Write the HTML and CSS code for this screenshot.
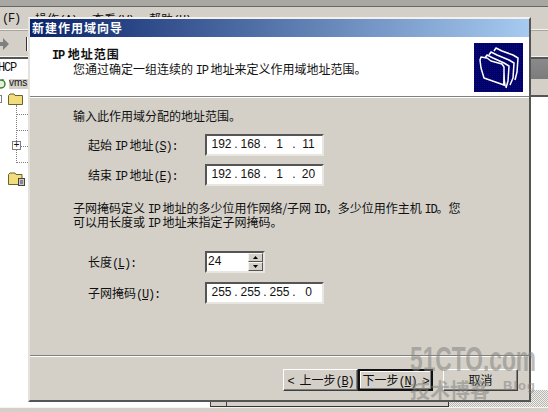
FILE: index.html
```html
<!DOCTYPE html>
<html lang="zh-CN">
<head>
  <meta charset="UTF-8" />
  <title>新建作用域向导</title>
  <link rel="stylesheet" href="styles.css">
</head>
<body>
  <div class="desktop">
    <div class="mmc">
      <div class="mmc-title"></div>
      <div class="mmc-menu">
        <span class="menu-file lat">(F)</span>
        <span class="menu-item">操作<span class="lat">(A)</span></span>
        <span class="menu-item">查看<span class="lat">(V)</span></span>
        <span class="menu-item">帮助<span class="lat">(H)</span></span>
      </div>
      <div class="mmc-tools">
        <svg class="tool-arrow" width="10" height="12" viewBox="0 0 10 12"><path d="M0 4h3V0l6 6-6 6V8H0z" fill="#808080"/></svg>
        <span class="tool-sep"></span>
      </div>
      <div class="mmc-head">
        <div class="head-left">HCP</div>
        <div class="head-right"></div>
      </div>
      <div class="mmc-main">
        <div class="tree">
          <div class="tree-server">
            <svg width="7" height="12" viewBox="0 0 7 12"><circle cx="1" cy="7" r="4" fill="#e6f0d8" stroke="#2f7a2f" stroke-width="1.4"/><path d="M3 0v3" stroke="#555"/></svg>
            <span class="tree-sel">vms</span>
          </div>
          <div class="tree-folder">
            <span class="tree-box"></span>
            <svg width="15" height="12" viewBox="0 0 15 12"><path d="M.5 2.500 2 1h4l1 1.500h7.500v9H.5z" fill="#f2dc7c" stroke="#6b6232"/></svg>
          </div>
          <div class="tree-lines">
            <span class="tree-branch tree-branch-first"></span>
            <span class="tree-branch"></span>
            <span class="tree-branch"><span class="tree-plus">+</span></span>
            <span class="tree-branch"></span>
          </div>
          <div class="tree-folder tree-last">
            <svg width="17" height="15" viewBox="0 0 17 15"><path d="M.5 3.500 2 2h5l1 1.500h6v10H.5z" fill="#f2dc7c" stroke="#6b6232"/><rect x="10.500" y="7.500" width="6" height="7" fill="#c8c8c8" stroke="#444"/><path d="M12 10h3M12 12h3" stroke="#444"/></svg>
          </div>
        </div>
        <div class="pane-right"><div class="pane-band"></div></div>
      </div>
      <div class="mmc-scroll">
        <div class="scroll-left"></div>
        <div class="scroll-bar"><span class="scroll-btn"></span></div>
        <div class="scroll-dither"></div>
      </div>
      <div class="mmc-status"></div>
    </div>

    <div class="dialog">
      <div class="dialog-title">新建作用域向导</div>
      <div class="dialog-head">
        <div class="head-text">
          <div class="head-name"><span class="lat">IP</span> 地址范围</div>
          <div class="head-sub">您通过确定一组连续的 <span class="lat">IP</span> 地址来定义作用域地址范围。</div>
        </div>
        <svg class="head-icon" width="49" height="49" viewBox="0 0 49 49">
          <defs>
            <pattern id="dots" width="2" height="2" patternUnits="userSpaceOnUse">
              <rect width="2" height="2" fill="#000066"/>
              <rect width="1" height="1" fill="#0a0a80"/>
            </pattern>
          </defs>
          <rect width="49" height="49" fill="url(#dots)"/>
          <g fill="none" stroke="#fff" stroke-width="1.500" stroke-linejoin="round">
            <path d="M20 8l2-3 6 3 11 4 5 3-1 14-2 8"/>
            <path d="M15 12l2-3 6 3 12 5 5 3-1 15-3 7"/>
            <path d="M11 15l2-3 6 3 11 5 5 3-1 15-2 7"/>
            <path d="M6 17l1-3 6 1 4 3 11 3 2 3v18l-20-7-3-10z"/>
          </g>
          <path d="M29 42l1-13 2 15z" fill="#fff"/>
        </svg>
      </div>
      <div class="rule"></div>
      <div class="dialog-body">
        <p class="intro">输入此作用域分配的地址范围。</p>
        <div class="row row-first">
          <label class="row-label">起始 <span class="lat">IP</span> 地址<span class="lat">(<u>S</u>):</span></label>
          <div class="ip-field">
            <span class="oct">192</span><span class="dot">.</span><span class="oct">168</span><span class="dot">.</span><span class="oct">1</span><span class="dot">.</span><span class="oct">11</span>
          </div>
        </div>
        <div class="row">
          <label class="row-label">结束 <span class="lat">IP</span> 地址<span class="lat">(<u>E</u>):</span></label>
          <div class="ip-field">
            <span class="oct">192</span><span class="dot">.</span><span class="oct">168</span><span class="dot">.</span><span class="oct">1</span><span class="dot">.</span><span class="oct">20</span>
          </div>
        </div>
        <p class="note">子网掩码定义 <span class="lat">IP</span> 地址的多少位用作网络/子网 <span class="lat">ID</span>，多少位用作主机 <span class="lat">ID</span>。您<br>可以用长度或 <span class="lat">IP</span> 地址来指定子网掩码。</p>
        <div class="row row-len">
          <label class="row-label">长度<span class="lat">(<u>L</u>):</span></label>
          <div class="spin">
            <span class="spin-val">24</span>
            <div class="spin-btns">
              <span class="spin-btn"><svg width="5" height="3" viewBox="0 0 5 3"><path d="M2.500 0 5 3H0z"/></svg></span>
              <span class="spin-btn"><svg width="5" height="3" viewBox="0 0 5 3"><path d="M0 0h5L2.500 3z"/></svg></span>
            </div>
          </div>
        </div>
        <div class="row">
          <label class="row-label">子网掩码<span class="lat">(<u>U</u>):</span></label>
          <div class="ip-field">
            <span class="oct">255</span><span class="dot">.</span><span class="oct">255</span><span class="dot">.</span><span class="oct">255</span><span class="dot">.</span><span class="oct">0</span>
          </div>
        </div>
      </div>
      <div class="rule"></div>
      <div class="dialog-foot">
        <button class="btn"><span class="lat">&lt; </span>上一步<span class="lat">(<u>B</u>)</span></button>
        <button class="btn btn-default">下一步<span class="lat">(<u>N</u>) &gt;</span></button>
        <button class="btn btn-cancel">取消</button>
      </div>
    </div>

    <div class="mark">
      <div class="mark-top">51CTO.com</div>
      <div class="mark-bottom"><span>技术博客</span><span class="mark-blog">Blog</span></div>
    </div>
  </div>
</body>
</html>
```

FILE: styles.css
```css
* {
  box-sizing: border-box;
}

body {
  margin: 0;
  overflow: hidden;
  font-family: "Noto Sans CJK SC", "Liberation Sans", sans-serif;
  font-size: 12px;
  line-height: 14px;
  color: #111;
}

u {
  text-underline-offset: 1px;
}

/* latin runs sit on a 6px grid next to the 12px CJK */
.lat {
  font-family: "Liberation Mono", monospace;
  font-size: 12px;
  letter-spacing: -1.2px;
  line-height: 0;
}

.desktop {
  position: relative;
  width: 548px;
  height: 412px;
  overflow: hidden;
  background: #d4d0c8;
}

/* window behind the dialog */
.mmc {
  display: flex;
  flex-direction: column;
  height: 412px;
}

.mmc-title {
  height: 7px;
  background: #a9a7a2;
  border-bottom: 1px solid #666;
}

.mmc-menu {
  display: flex;
  height: 23px;
  padding: 5px 0 0 2px;
  background: #d4d0c8;
  border-bottom: 1px solid #f4f3ef;
}

.menu-file {
  width: 33px;
  line-height: 14px;
}

.menu-item {
  width: 57px;
}

.mmc-tools {
  display: flex;
  align-items: center;
  gap: 16px;
  height: 27px;
  background: #d4d0c8;
  border-top: 1px solid #a8a59e;
  border-bottom: 1px solid #f4f3ef;
}

.tool-sep {
  width: 2px;
  height: 14px;
  border-left: 1px solid #333;
  border-right: 1px solid #fff;
}

.mmc-head {
  display: flex;
  height: 22px;
  border-top: 2px solid #555;
}

.head-left {
  width: 28px;
  padding-top: 3px;
  background: #fff;
  font-family: "Liberation Mono", monospace;
  letter-spacing: -1.2px;
  line-height: 12px;
  text-indent: -2px;
}

.head-right {
  flex: 1;
  background: linear-gradient(#8a8a8a, #7c7c7c);
}

.mmc-main {
  display: flex;
  flex: 1;
  background: #fff;
}

.tree {
  width: 28px;
  overflow: hidden;
}

.tree-server {
  display: flex;
  height: 15px;
  margin-top: -2px;
}

.tree-sel {
  width: 19px;
  margin-left: 2px;
  height: 12px;
  background: #d4d0c8;
  font-family: "Liberation Sans", sans-serif;
  font-size: 10px;
  line-height: 12px;
}

.tree-folder {
  display: flex;
  align-items: center;
  height: 13px;
  padding-left: 8px;
}

.tree-box {
  position: absolute;
  left: 0;
  width: 2px;
  height: 8px;
  border: 1px solid #808080;
  border-left: 0;
}

.tree-lines {
  display: flex;
  flex-direction: column;
  margin-left: 16px;
  border-left: 1px dotted #808080;
}

.tree-branch {
  position: relative;
  height: 16px;
  border-bottom: 1px dotted #808080;
}

.tree-branch-first {
  height: 10px;
}

.tree-plus {
  position: absolute;
  left: -5px;
  top: 10px;
  width: 9px;
  height: 9px;
  border: 1px solid #808080;
  background: #fff;
  font: 10px/7px "Liberation Mono", monospace;
  text-align: center;
}

.tree-last {
  height: 23px;
  padding-top: 8px;
}

.pane-right {
  flex: 1;
}

.pane-band {
  height: 18px;
  background: #d4d0c8;
  border-bottom: 2px solid #555;
}

.mmc-scroll {
  display: flex;
  height: 17px;
  background: #fff;
}

.scroll-left {
  width: 210px;
}

.scroll-bar {
  width: 239px;
  background: #d4d0c8;
  border-left: 1px solid #444;
  border-bottom: 1px solid #333;
  border-right: 1px solid #333;
}

.scroll-btn {
  display: block;
  width: 16px;
  height: 100%;
  border-right: 1px solid #444;
}

.scroll-dither {
  flex: 1;
  background: repeating-conic-gradient(#b8b6b0 0 25%, #f0efeb 0 50%) 0 0 / 2px 2px;
}

.mmc-status {
  height: 5px;
  background: #d4d0c8;
  border-top: 1px solid #f4f3ef;
}

/* wizard dialog */
.dialog {
  position: absolute;
  left: 28px;
  top: 17px;
  display: flex;
  flex-direction: column;
  width: 503px;
  height: 385px;
  background: #d4d0c8;
  border: 2px solid;
  border-color: #f2f1ed #555 #555 #e4e2dc;
}

.dialog-title {
  height: 18px;
  padding: 2px 0 0 2px;
  background: linear-gradient(to right, #0a246a, #a6caf0);
  color: #fff;
  font-weight: bold;
  letter-spacing: 1px;
}

.dialog-head {
  display: flex;
  justify-content: space-between;
  height: 59px;
  padding: 6px 6px 0 22px;
  background: #fff;
}

.head-text {
  padding-top: 4px;
}

.head-name {
  font-weight: bold;
  letter-spacing: 1px;
}

.head-name .lat {
  letter-spacing: -1.2px;
}

.head-sub {
  margin-left: 21px;
  margin-top: 1px;
}

.rule {
  height: 2px;
  border-top: 1px solid #808080;
  border-bottom: 1px solid #fff;
}

.dialog-body {
  flex: 1;
  padding: 11px 0 0 43px;
}

.intro {
  margin: 0 0 11px;
}

.row {
  display: flex;
  align-items: center;
  height: 22px;
  margin-bottom: 8px;
  padding-left: 15px;
}

.row-len {
  margin-bottom: 9px;
}

.row-label {
  width: 117px;
}

.ip-field {
  display: grid;
  grid-template-columns: 23px 6px 23px 6px 23px 6px 23px;
  width: 119px;
  height: 22px;
  padding-left: 3px;
  background: #fff;
  border: 2px solid;
  border-color: #555 #e8e6e0 #e8e6e0 #555;
  font-family: "Liberation Sans", sans-serif;
  line-height: 17px;
  text-align: center;
}

.note {
  margin: 15px 0 22px;
}

.spin {
  display: flex;
  justify-content: space-between;
  width: 60px;
  height: 22px;
  background: #fff;
  border: 2px solid;
  border-color: #555 #e8e6e0 #e8e6e0 #555;
  font-family: "Liberation Sans", sans-serif;
}

.spin-val {
  padding-left: 1px;
  line-height: 17px;
}

.spin-btns {
  display: flex;
  flex-direction: column;
  width: 15px;
}

.spin-btn {
  display: flex;
  flex: 1;
  align-items: center;
  justify-content: center;
  background: #d4d0c8;
  border: 1px solid;
  border-color: #f4f3ef #555 #555 #f4f3ef;
}

.dialog-foot {
  display: flex;
  justify-content: flex-end;
  height: 43px;
  padding: 12px 11px 0 0;
}

.btn {
  width: 75px;
  height: 22px;
  padding: 0;
  background: #d4d0c8;
  border: 1px solid;
  border-color: #fff #404040 #404040 #fff;
  box-shadow: inset -1px -1px 0 #808080;
  color: #111;
  font: inherit;
  white-space: pre;
}

.btn-default {
  border: 2px solid #111;
  box-shadow: inset -1px -1px 0 #808080, inset 1px 1px 0 #fff;
}

.btn-cancel {
  margin-left: 10px;
}

/* blog watermark */
.mark {
  position: absolute;
  left: 410px;
  top: 344px;
  width: 126px;
  color: rgba(130, 130, 125, 0.55);
  pointer-events: none;
}

.mark-top {
  height: 30px;
  font: bold 35px/30px "Liberation Sans", sans-serif;
  white-space: nowrap;
  transform: scaleX(0.65);
  transform-origin: left;
}

.mark-bottom {
  display: flex;
  justify-content: space-between;
  align-items: center;
  margin-top: 4px;
  font-size: 20px;
  line-height: 22px;
  font-weight: bold;
}

.mark-blog {
  margin-bottom: 8px;
  font: bold 13px "Liberation Sans", sans-serif;
  letter-spacing: 1px;
}
```
